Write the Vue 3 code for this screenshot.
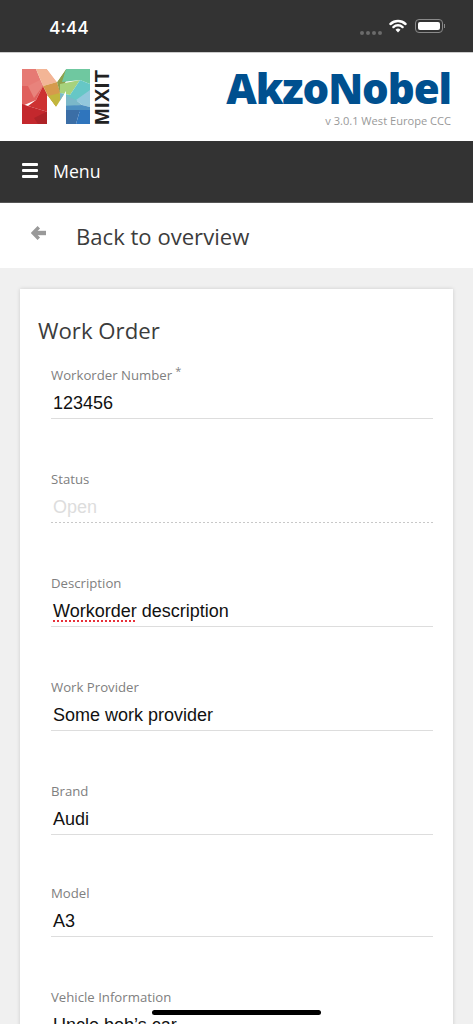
<script setup>
const fields = [
  { label: 'Workorder Number', value: '123456', required: true },
  { label: 'Status', value: 'Open', disabled: true },
  { label: 'Description', value: ' description', flagged: 'Workorder' },
  { label: 'Work Provider', value: 'Some work provider' },
  { label: 'Brand', value: 'Audi', tight: true },
  { label: 'Model', value: 'A3' },
  { label: 'Vehicle Information', value: 'Uncle bob’s car' }
]

// facets of the M logo
const facets = [
  ['#e67a74', '22,69 36,69 43,86 22,92'],
  ['#f3b596', '36,69 47,69 57,82 43,86'],
  ['#e0605d', '22,86 43,86 36,100 22,106'],
  ['#e8837c', '28,86 40,80 43,86 34,98'],
  ['#cd3131', '43,86 48,96 48,112 28,106 36,100'],
  ['#c4282d', '22,104 28,106 48,112 48,124 22,124'],
  ['#ae2328', '34,118 48,111 48,124 38,124'],
  ['#d69a4c', '43,86 57,82 60,92 56,107 48,96'],
  ['#c2b63e', '48,96 60,93 66,98 56,107'],
  ['#8fa14b', '57,82 66,69 66,81 60,93'],
  ['#a7d27c', '60,84 80,80 70,95 60,93'],
  ['#6fc8a0', '66,69 90,69 90,84 80,80 62,82'],
  ['#66c7c6', '80,80 90,84 90,96 72,103 60,93 70,95'],
  ['#93c8dc', '76,100 90,90 90,107 82,105'],
  ['#7bb8c9', '60,93 76,100 82,105 60,108'],
  ['#4d8fc0', '60,106 82,105 90,107 90,112 60,112'],
  ['#3b6ea6', '60,110 80,110 76,124 60,124'],
  ['#2f75bd', '80,110 90,110 90,124 76,124']
]
</script>

<template>
  <div class="page">
    <div class="status-bar">
      <span class="time">4:44</span>
      <div class="status-icons">
        <span class="signal"><i></i><i></i><i></i><i></i></span>
        <svg width="18" height="14" viewBox="0 0 18 14">
          <path d="M1.5 5a11 11 0 0 1 15 0" fill="none" stroke="#fff" stroke-width="2.4" stroke-linecap="round" />
          <path d="M4.4 8.1a6.8 6.8 0 0 1 9.2 0" fill="none" stroke="#fff" stroke-width="2.4" stroke-linecap="round" />
          <path d="M6.5 10.7 9 13.4l2.5-2.7a3.5 3.5 0 0 0-5 0z" fill="#fff" />
        </svg>
        <span class="battery"><b></b></span>
      </div>
    </div>

    <header class="brand-bar">
      <div class="mixit">
        <svg width="69" height="56" viewBox="22 69 69 56">
          <clipPath id="m-shape">
            <path d="M22 69h25l10 13 9-13h24v55H66V91l-10 16-9-12v29H22z" />
          </clipPath>
          <g clip-path="url(#m-shape)">
            <polygon v-for="f in facets" :key="f[1]" :points="f[1]" :fill="f[0]" />
          </g>
        </svg>
        <span class="mixit-word">MIXIT</span>
      </div>
      <div class="akzo">
        <div class="akzo-word">AkzoNobel</div>
        <div class="version">v 3.0.1 West Europe CCC</div>
      </div>
    </header>

    <nav class="menu-bar">
      <span class="burger"><i></i><i></i><i></i></span>
      <span>Menu</span>
    </nav>

    <div class="back-bar">
      <svg class="back-arrow" width="15" height="16" viewBox="0 0 15 16">
        <path d="M7.8 2.2 2.2 8l5.6 5.8" fill="none" stroke="#999" stroke-width="3.4" />
        <path d="M3 5.8h12v4.4H3z" fill="#999" />
      </svg>
      <span>Back to overview</span>
    </div>

    <main class="content">
      <section class="card">
        <h1>Work Order</h1>
        <div v-for="field in fields" :key="field.label" class="field" :class="{ tight: field.tight }">
          <label>{{ field.label }}<sup v-if="field.required">*</sup></label>
          <div class="input" :class="{ disabled: field.disabled }">
            <span v-if="field.flagged" class="squiggle">{{ field.flagged }}</span>{{ field.value }}
          </div>
        </div>
      </section>
    </main>

    <div class="home-indicator"></div>
  </div>
</template>

<style>
body {
  margin: 0;
  background: #f0f0f0;
}
</style>

<style scoped>
.page {
  position: relative;
  width: 473px;
  height: 1024px;
  overflow: hidden;
  background: #f0f0f0;
  font-family: "Open Sans", sans-serif;
  color: #333;
}

.status-bar {
  height: 52px;
  box-sizing: border-box;
  padding: 0 30px 0 49px;
  display: flex;
  align-items: center;
  justify-content: space-between;
  background: #333;
  color: #fff;
}

.time {
  font-family: Inter, sans-serif;
  font-size: 17.5px;
  font-weight: 500;
  position: relative;
  top: 1px;
}

.status-icons {
  display: flex;
  align-items: center;
}

.signal {
  display: flex;
  gap: 2px;
  margin: 14px 7px 0 0;
}

.signal i {
  width: 4px;
  height: 4px;
  border-radius: 50%;
  background: #6b6b6b;
}

.battery {
  position: relative;
  width: 28px;
  height: 14px;
  margin-left: 8px;
  box-sizing: border-box;
  padding: 2px;
  border: 1px solid #8a8a8a;
  border-radius: 4px;
}

.battery b {
  display: block;
  height: 100%;
  border-radius: 2px;
  background: #fff;
}

.battery::after {
  content: "";
  position: absolute;
  right: -3px;
  top: 4px;
  width: 1px;
  height: 4px;
  background: #8a8a8a;
}

.brand-bar {
  height: 89px;
  box-sizing: border-box;
  padding: 16px 22px 0;
  display: flex;
  justify-content: space-between;
  align-items: flex-start;
  background: #fff;
  border-top: 1px solid #ccc;
}

.mixit {
  display: flex;
  align-items: flex-start;
}

.mixit-word {
  margin-left: 4px;
  height: 56px;
  writing-mode: vertical-rl;
  transform: rotate(180deg);
  font-family: "Liberation Sans", sans-serif;
  font-size: 20px;
  font-weight: 700;
  line-height: 15px;
  text-align: left;
  letter-spacing: 0.4px;
  color: #222;
}

.akzo {
  text-align: right;
}

.akzo-word {
  margin-top: -3px;
  font-family: "Open Sans", sans-serif;
  font-size: 42px;
  font-weight: 800;
  line-height: 44px;
  letter-spacing: -1.1px;
  color: #00508f;
}

.version {
  margin-top: 4px;
  font-size: 11.1px;
  line-height: 14px;
  color: #999;
}

.menu-bar {
  height: 62px;
  box-sizing: border-box;
  padding: 0 0 2px 22px;
  display: flex;
  align-items: center;
  gap: 15px;
  background: #333;
  color: #fff;
  font-size: 17.7px;
  border-bottom: 1px solid #555;
}

.burger {
  display: flex;
  flex-direction: column;
  gap: 3px;
  width: 16px;
}

.burger i {
  height: 3px;
  border-radius: 1px;
  background: #fff;
}

.back-bar {
  height: 65px;
  display: flex;
  align-items: center;
  padding-left: 31px;
  background: #fff;
  font-size: 22.1px;
  color: #3c3c3c;
}

.back-arrow {
  margin: -5px 30px 0 0;
}

.content {
  padding: 21px 20px 0;
}

.card {
  padding: 26px 20px 0 18px;
  background: #fff;
  box-shadow: 0 0 4px rgba(0, 0, 0, 0.15);
}

h1 {
  margin: 0 0 19px;
  font-size: 22.2px;
  font-weight: 400;
  line-height: 32px;
  color: #3c3c3c;
}

.field {
  margin: 0 0 51px 13px;
}

.field.tight {
  margin-bottom: 49px;
}

label {
  display: block;
  font-size: 13.2px;
  line-height: 18px;
  color: #808080;
}

sup {
  margin-left: 3px;
  font-size: 11px;
  line-height: 0;
}

.input {
  height: 35px;
  box-sizing: border-box;
  padding: 7px 0 0 2px;
  border-bottom: 1px solid #ddd;
  font-family: "Liberation Sans", sans-serif;
  font-size: 18px;
  line-height: 24px;
  color: #111;
}

.input.disabled {
  border-bottom: 0;
  color: #ddd;
  background: repeating-linear-gradient(to right, #c8c8c8 0 2px, transparent 2px 4px) bottom / 100% 1px no-repeat;
}

.squiggle {
  text-decoration: underline dotted #e8303a;
  text-decoration-thickness: 1.5px;
  text-underline-offset: 3px;
}

.home-indicator {
  position: absolute;
  left: 152px;
  bottom: 9px;
  width: 169px;
  height: 5px;
  border-radius: 3px;
  background: #000;
}
</style>
